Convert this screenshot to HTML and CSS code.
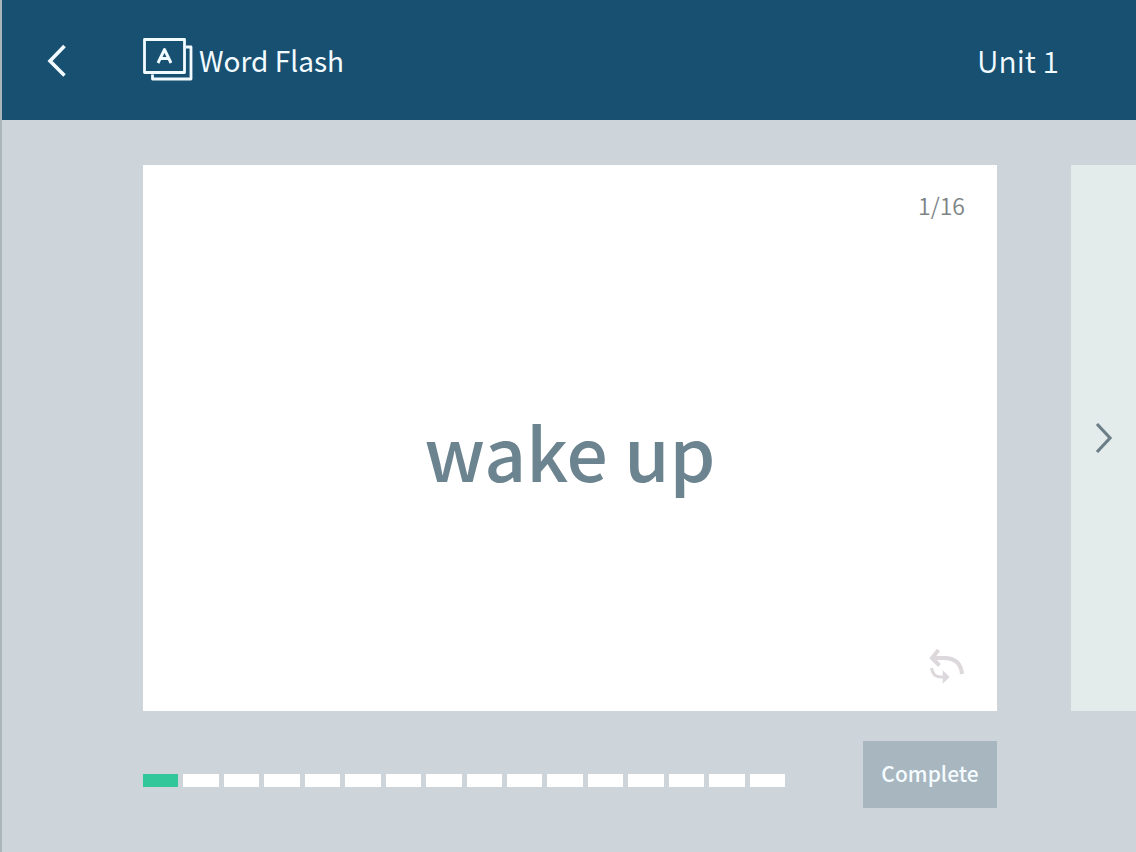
FILE: index.html
```html
<!DOCTYPE html>
<html lang="en">
<head>
<meta charset="utf-8">
<meta name="viewport" content="width=device-width, initial-scale=1">
<title>Word Flash</title>
<link rel="stylesheet" href="styles.css">
</head>
<body>
<header class="topbar">
  <button class="icon-button back" type="button" aria-label="Back">
    <svg width="20" height="34" viewBox="0 0 20 34" fill="none" stroke="currentColor" stroke-width="3.6"><path d="M18.500 3 4 18l14.500 14.500"/></svg>
  </button>
  <h1 class="title">
    <svg width="50" height="44" viewBox="0 0 50 44" fill="none" stroke="currentColor" stroke-width="2.8" stroke-linejoin="round" aria-hidden="true"><path d="M1.500 1.500h40v33h-40zM43 9h5v32H9.500V36.500"/><path d="M15 25l6.500-13.500L28 25M17.500 20.500h8" stroke-width="2.900"/></svg>
    <span>Word Flash</span>
  </h1>
  <p class="unit">Unit 1</p>
</header>
<main class="stage">
  <article class="card">
    <p class="count">1/16</p>
    <h2 class="word">wake up</h2>
    <button class="icon-button flip" type="button" aria-label="Flip card">
      <svg width="36" height="36" viewBox="0 0 36 36" fill="none" stroke="currentColor" stroke-width="4"><path d="M3 10h12c11 0 17 5 18 16M9.500 2 3 10l7.500 7.500"/><path d="M2.500 20c1 6 4 9 9 9h6" stroke-width="3"/><path d="M14.500 24l5 5-5 5z" fill="currentColor" stroke-width="1.500"/></svg>
    </button>
  </article>
  <button class="next" type="button" aria-label="Next card">
    <svg width="20" height="34" viewBox="0 0 20 34" fill="none" stroke="currentColor" stroke-width="3.200"><path d="M4 3l13 14L4 31"/></svg>
  </button>
  <footer class="footer">
    <ol class="progress" aria-label="Card 1 of 16">
      <li class="step done"></li><li class="step"></li><li class="step"></li><li class="step"></li>
      <li class="step"></li><li class="step"></li><li class="step"></li><li class="step"></li>
      <li class="step"></li><li class="step"></li><li class="step"></li><li class="step"></li>
      <li class="step"></li><li class="step"></li><li class="step"></li><li class="step"></li>
    </ol>
    <button class="complete" type="button">Complete</button>
  </footer>
</main>
</body>
</html>
```
FILE: styles.css
```css
* { box-sizing: border-box; }

body {
  margin: 0;
  min-height: 100vh;
  display: flex;
  flex-direction: column;
  border-left: 2px solid #a9b5b8;
  background: #ced5da;
  font-family: "Noto Sans CJK SC", "Noto Sans", sans-serif;
}

h1, h2, p, ol { margin: 0; padding: 0; font-weight: 400; }
button { border: 0; padding: 0; font: inherit; cursor: pointer; }
svg { display: block; flex: none; }

.topbar {
  display: flex;
  align-items: center;
  height: 120px;
  padding: 0 77px 0 44px;
  background: #185071;
  color: #f2fbff;
}

.icon-button { background: none; color: inherit; }
.back { width: 97px; }

.title {
  display: flex;
  align-items: center;
  gap: 6px;
  font-size: 28px;
  line-height: 40px;
}

.unit { margin-left: auto; font-size: 30px; font-weight: 350; line-height: 40px; }

.stage {
  flex: 1;
  display: grid;
  grid-template-columns: 1fr 65px;
  grid-template-rows: 1fr auto;
  column-gap: 74px;
  row-gap: 30px;
  padding: 45px 0 44px 141px;
}

.card {
  display: grid;
  grid-template-rows: 40px 1fr 40px;
  padding: 20px 32px 25px;
  background: #fff;
}

.count { justify-self: end; color: #7c8386; font-size: 23px; font-weight: 350; line-height: 40px; }

.word {
  place-self: center;
  padding-top: 28px;
  color: #6c8490;
  font-size: 73px;
  font-weight: 500;
  line-height: 100px;
}

.flip { justify-self: end; align-self: center; color: #dcd8dc; }

.next {
  display: flex;
  align-items: center;
  padding-left: 22px;
  background: #e4ebeb;
  color: #6c7f88;
}

.footer { display: flex; align-items: center; justify-content: space-between; gap: 78px; }

.progress { flex: 1; display: flex; gap: 5px; padding-top: 12px; list-style: none; }
.step { flex: 1; height: 13px; background: #fff; }
.done { background: #32c79b; }

.complete {
  width: 134px;
  height: 67px;
  padding-bottom: 4px;
  background: #a7b6bf;
  color: #f5fcff;
  font-size: 21px;
  font-weight: 500;
}
```
